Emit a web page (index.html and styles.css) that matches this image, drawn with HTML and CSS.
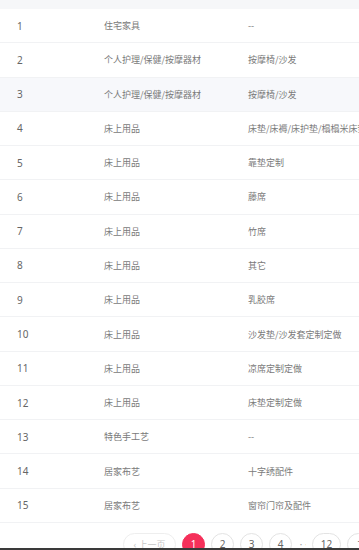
FILE: index.html
```html
<!DOCTYPE html>
<html lang="zh">
<head>
<meta charset="utf-8">
<link rel="stylesheet" href="styles.css">
</head>
<body>
<div class="viewport">
  <div class="page">
    <div class="head-band"></div>
    <div class="table">
      <div class="row"><div class="c c1">1</div><div class="c c2">住宅家具</div><div class="c c3">--</div></div>
      <div class="row"><div class="c c1">2</div><div class="c c2">个人护理/保健/按摩器材</div><div class="c c3">按摩椅/沙发</div></div>
      <div class="row hover"><div class="c c1">3</div><div class="c c2">个人护理/保健/按摩器材</div><div class="c c3">按摩椅/沙发</div></div>
      <div class="row"><div class="c c1">4</div><div class="c c2">床上用品</div><div class="c c3">床垫/床褥/床护垫/榻榻米床垫</div></div>
      <div class="row"><div class="c c1">5</div><div class="c c2">床上用品</div><div class="c c3">靠垫定制</div></div>
      <div class="row"><div class="c c1">6</div><div class="c c2">床上用品</div><div class="c c3">藤席</div></div>
      <div class="row"><div class="c c1">7</div><div class="c c2">床上用品</div><div class="c c3">竹席</div></div>
      <div class="row"><div class="c c1">8</div><div class="c c2">床上用品</div><div class="c c3">其它</div></div>
      <div class="row"><div class="c c1">9</div><div class="c c2">床上用品</div><div class="c c3">乳胶席</div></div>
      <div class="row"><div class="c c1">10</div><div class="c c2">床上用品</div><div class="c c3">沙发垫/沙发套定制定做</div></div>
      <div class="row"><div class="c c1">11</div><div class="c c2">床上用品</div><div class="c c3">凉席定制定做</div></div>
      <div class="row"><div class="c c1">12</div><div class="c c2">床上用品</div><div class="c c3">床垫定制定做</div></div>
      <div class="row"><div class="c c1">13</div><div class="c c2">特色手工艺</div><div class="c c3">--</div></div>
      <div class="row"><div class="c c1">14</div><div class="c c2">居家布艺</div><div class="c c3">十字绣配件</div></div>
      <div class="row"><div class="c c1">15</div><div class="c c2">居家布艺</div><div class="c c3">窗帘门帘及配件</div></div>
    </div>
    <div class="pager">
      <span class="pbtn prev">‹ 上一页</span>
      <span class="pbtn num active">1</span>
      <span class="pbtn num">2</span>
      <span class="pbtn num">3</span>
      <span class="pbtn num">4</span>
      <span class="dots">···</span>
      <span class="pbtn num wide">12</span>
      <span class="pbtn next">下一页 ›</span>
    </div>
  </div>
  <div class="scrollbar"></div>
</div>
</body>
</html>
```
FILE: styles.css
```css
html, body {
  margin: 0;
  padding: 0;
  background: #ffffff;
}
body {
  width: 359px;
  height: 550px;
  overflow: hidden;
  font-family: "Noto Sans CJK SC", "Noto Sans", sans-serif;
}
.viewport {
  display: flex;
  flex-direction: column;
  height: 550px;
}
.page {
  height: 548px;
  overflow: hidden;
  flex: none;
}
.head-band {
  height: 9px;
  background: #f6f7f9;
}
.table {
  width: 460px;
}
.row {
  display: flex;
  align-items: center;
  height: 34.27px;
  box-sizing: border-box;
  border-bottom: 1px solid #f1f2f4;
  font-size: 9px;
  color: #7a7a7a;
}
.row.hover {
  background: #f7f8fb;
}
.c {
  padding-left: 16px;
  box-sizing: border-box;
  white-space: nowrap;
  flex: none;
}
.c1 {
  width: 88px;
  padding-left: 17px;
  color: #666;
  font-family: "Noto Sans", sans-serif;
  font-size: 10px;
}
.c2 { width: 144px; }
.c3 { width: 220px; }
.pager {
  display: flex;
  align-items: center;
  gap: 6px;
  padding: 10px 0 0 123px;
  white-space: nowrap;
}
.pbtn {
  flex: none;
  height: 23px;
  box-sizing: border-box;
  border: 1px solid #e3e3e3;
  border-radius: 12px;
  display: flex;
  align-items: center;
  justify-content: center;
  font-size: 10px;
  color: #666;
  font-family: "Noto Sans", "Noto Sans CJK SC", sans-serif;
}
.num { width: 23px; }
.num.wide { width: 29px; }
.active {
  background: #f5305a;
  border-color: #f5305a;
  color: #fff;
}
.prev {
  width: 53px;
  color: #c8c8c8;
  border-color: #eeeeee;
  font-size: 9px;
}
.next {
  width: 53px;
  font-size: 9px;
  color: #666;
}
.dots {
  width: 8px;
  font-size: 6px;
  letter-spacing: -0.5px;
  color: #999;
  text-align: center;
  flex: none;
  overflow: hidden;
}
.scrollbar {
  height: 2px;
  background: #3a3a3a;
  flex: none;
}
```
